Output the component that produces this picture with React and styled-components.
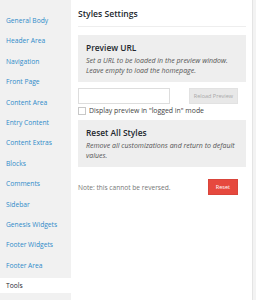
import React from 'react';
import styled, { createGlobalStyle } from 'styled-components';

const Global = createGlobalStyle`
body {
    margin: 0;
    font-family: 'Open Sans', 'Liberation Sans', sans-serif;
    background: #f1f1f1;
}
`;

const Wrap = styled.div`
display: flex;
width: 256px;
height: 300px;
overflow: hidden;
background: #f3f3f3;
`;

const Sidebar = styled.ul`
list-style: none;
margin: 0;
padding: 13px 0 0;
width: 71px;
flex-shrink: 0;
display: flex;
flex-direction: column;
gap: 5.4px;
background: #f1f1f1;
`;

const NavItem = styled.li`
height: 15px;
line-height: 15px;
padding-left: 6px;
font-size: 6.7px;
color: ${props => props.active ? '#23282d' : '#2f8bc9'};
background: ${props => props.active ? '#fff' : 'transparent'};
white-space: nowrap;
`;

const Main = styled.div`
width: 168px;
flex-shrink: 0;
background: #fff;
padding: 0 6px 0 7px;
border-right: 1px solid #e4e4e4;
`;

const Heading = styled.h1`
margin: 0;
padding: 8px 0 6px;
font-size: 8.6px;
font-weight: 600;
color: #23282d;
border-bottom: 1px solid #eee;
`;

const Box = styled.div`
background: #eeeeee;
margin-top: ${props => props.top};
padding: 7px 8px 6px;
`;

const BoxTitle = styled.h2`
margin: 0 0 3px;
font-size: 8.4px;
font-weight: 600;
color: #23282d;
`;

const BoxText = styled.p`
margin: 0;
font-size: 7px;
line-height: 10px;
font-style: italic;
color: #555;
`;

const InputRow = styled.div`
display: flex;
align-items: center;
justify-content: space-between;
margin-top: 6px;
padding-right: 8px;
`;

const UrlInput = styled.input`
box-sizing: border-box;
width: 92px;
height: 16px;
border: 1px solid #ddd;
margin: 0;
padding: 0;
`;

const Button = styled.button`
box-sizing: border-box;
height: 16px;
padding: 0 ${props => props.pad || '4px'};
border: 1px solid ${props => props.danger ? '#d9453b' : '#e2e2e2'};
background: ${props => props.danger ? '#e6493e' : '#e8e8e8'};
color: ${props => props.danger ? '#fff' : '#a9a9a9'};
font-family: 'Open Sans', 'Liberation Sans', sans-serif;
font-size: 5.5px;
`;

const CheckRow = styled.label`
display: flex;
align-items: center;
gap: 3px;
margin-top: 2px;
font-size: 6.9px;
color: #444;
`;

const Check = styled.span`
box-sizing: border-box;
width: 8px;
height: 8px;
border: 1px solid #c8c8c8;
background: #fff;
`;

const NoteRow = styled.div`
display: flex;
align-items: center;
justify-content: space-between;
margin-top: 12px;
padding-right: 8px;
`;

const Note = styled.span`
font-size: 6.6px;
color: #777;
`;

const navItems = [
    'General Body', 'Header Area', 'Navigation', 'Front Page', 'Content Area',
    'Entry Content', 'Content Extras', 'Blocks', 'Comments', 'Sidebar',
    'Genesis Widgets', 'Footer Widgets', 'Footer Area', 'Tools'
];

export default function App() {
    return (
        <Wrap>
            <Global />
            <Sidebar>
                {navItems.map(item => (
                    <NavItem key={item} active={item === 'Tools'}>{item}</NavItem>
                ))}
            </Sidebar>
            <Main>
                <Heading>Styles Settings</Heading>
                <Box top="8px">
                    <BoxTitle>Preview URL</BoxTitle>
                    <BoxText>Set a URL to be loaded in the preview window.<br />Leave empty to load the homepage.</BoxText>
                </Box>
                <InputRow>
                    <UrlInput type="text" />
                    <Button>Reload Preview</Button>
                </InputRow>
                <CheckRow>
                    <Check />
                    Display preview in "logged in" mode
                </CheckRow>
                <Box top="5px">
                    <BoxTitle>Reset All Styles</BoxTitle>
                    <BoxText>Remove all customizations and return to default values.</BoxText>
                </Box>
                <NoteRow>
                    <Note>Note: this cannot be reversed.</Note>
                    <Button danger pad="7px">Reset</Button>
                </NoteRow>
            </Main>
        </Wrap>
    );
}
